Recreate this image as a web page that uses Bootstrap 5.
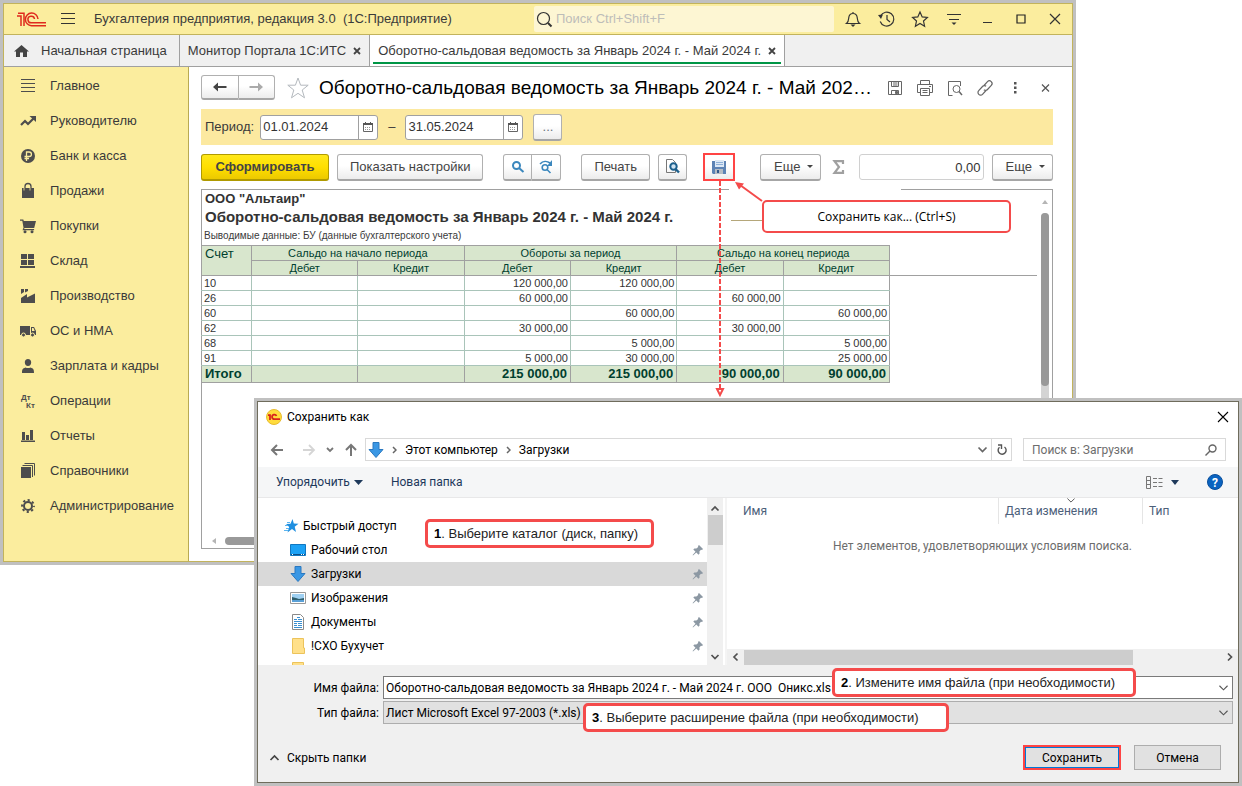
<!DOCTYPE html>
<html lang="ru">
<head>
<meta charset="utf-8">
<meta name="viewport" content="width=device-width, initial-scale=1">
<title>Бухгалтерия предприятия, редакция 3.0</title>
<link href="https://cdn.jsdelivr.net/npm/bootstrap@5.3.0/dist/css/bootstrap.min.css" rel="stylesheet">
<style>
  body { font: 13px/18px "Liberation Sans", Arial, sans-serif; color: #3a3a3a; background: #fff; min-height: 100vh; overflow: hidden; }
  svg { display: block; flex: none; overflow: visible; }
  a { color: inherit; text-decoration: none; }
  button { color: inherit; }
  .bare { background: none; border: 0; padding: 0; }

  /* application window */
  .app-win { position: absolute; top: 0; left: 0; right: 166px; border: 3px solid #c0c0c0; }
  .app-frame { border: 1px solid #c2b35c; }
  .app-title { height: 31px; background: #fbed9e; border-bottom: 1px solid #c2b35c; padding-left: 13px; }
  .app-menu { margin: 0 15px 0 14px; }
  .app-search { width: 300px; height: 26px; background: #fdf6d3; border-radius: 2px; padding-left: 3px; gap: 4px; margin-right: 2px; }
  .app-search input { background: none; border: 0; outline: 0; padding: 0; width: 240px; font-size: 13px; }
  .app-search input::placeholder { color: #bdbdb9; opacity: 1; }
  .win-tools { width: 236px; }
  .win-tools button { flex: 1; display: flex; justify-content: center; }
  .tabs-bar { height: 32px; background: #f0f0f0; border-bottom: 1px solid #a0a0a0; }
  .tab-item { border-right: 1px solid #a0a0a0; padding: 0 8px; gap: 7px; white-space: nowrap; }
  .tab-home { padding: 0 12px 0 10px; gap: 12px; }
  .tab-item.current { background: #fff; padding: 0 8px; position: relative; }
  .tab-item.current::after { content: ""; position: absolute; left: 3px; right: 3px; bottom: 2px; height: 2px; background: #009646; }

  .side-menu { width: 185px; background: #fbed9e; border-right: 1px solid #b9aa52; padding-top: 1px; }
  .side-menu a { height: 35px; padding-left: 14px; gap: 12px; }
  .side-menu svg { width: 20px; height: 20px; fill: #4d4d4d; }

  .work-area { padding: 8px 19px 12px 12px; min-width: 0; }
  .btn-1c { --bs-btn-font-size: 13px; --bs-btn-line-height: 18px; height: 27px; padding: 0 12px; border: 1px solid #b0b0b0; border-bottom: 2px solid #a6a6a6; border-radius: 3px; background: linear-gradient(#fff 45%, #ececec); color: #444; white-space: nowrap; display: inline-flex; align-items: center; justify-content: center; flex: none; }
  .btn-run { background: linear-gradient(#ffe81a, #ffdf00 50%, #ecc900); border-color: #b09a00; font-weight: 700; width: 128px; }
  .btn-more { padding: 0 7px 0 13px; }
  .split-btn > .btn-1c:first-child { border-radius: 3px 0 0 3px; }
  .split-btn > .btn-1c:last-child { border-radius: 0 3px 3px 0; border-left: 0; }
  .nav-pair .btn-1c { height: 25px; padding: 0; }
  .sq { width: 29px; padding: 0; }
  .doc-title { font-size: 19px; line-height: 25px; color: #000; margin: 0 11px 0 10px; min-width: 0; }
  .doc-tools { gap: 14px; }
  .period-bar { background: #fce9a0; height: 36px; margin-top: 9px; padding: 0 4px; gap: 6px; }
  .date-box { width: 118px; height: 25px; border: 1px solid #a0a0a0; border-radius: 3px; background: #fff; }
  .date-box input { border: 0; outline: 0; background: none; width: 98px; padding: 0 2px; color: #333; border-right: 1px solid #a0a0a0; }
  .date-box button { flex: 1; }
  .cmd-bar { margin-top: 8px; gap: 8px; }
  .red-frame { border: 2px solid #f44; height: 28px; width: 32px; flex: none; }
  .after-red { margin-left: 17px; }
  .sum-box { width: 125px; height: 26px; border: 1px solid #d0d0d0; border-radius: 3px; text-align: right; padding: 0 2px; color: #333; }
  .caret { width: 0; height: 0; border: 3px solid transparent; border-top-color: #444; border-bottom: 0; margin-left: 7px; }

  .report { margin-top: 8px; height: 360px; border: 1px solid #a0a0a0; position: relative; }
  .report-org { font-size: 13px; line-height: 16px; padding: 1px 3px 0; color: #333; }
  .report-name { font-size: 15px; line-height: 20px; font-weight: 700; padding-left: 3px; margin: 0; color: #333; }
  .report-note { font-size: 10px; line-height: 18px; padding-left: 2px; }
  .osv { table-layout: fixed; width: 689px; border-collapse: collapse; margin-left: -1px; font-size: 11px; line-height: 14px; color: #333; }
  .osv col:first-child { width: 50px; }
  .osv th, .osv td { height: 15px; padding: 0 2px; border: 1px solid #a9c4b9; text-align: right; white-space: nowrap; }
  .osv td:first-child { text-align: left; border-left-color: #a0a0a0; }
  .osv td:last-child { border-right-color: #a0a0a0; }
  .osv th, .osv tfoot td { background: #d8e6cd; border-color: #a0a0a0; color: #00402f; }
  .osv th { font-weight: 400; text-align: center; }
  .osv .acc { font-size: 13px; text-align: left; vertical-align: top; padding: 1px 3px; }
  .osv tfoot td { font-weight: 700; font-size: 13px; height: 17px; padding: 0 3px; }
  .freeze-line { position: absolute; left: 687px; right: 15px; top: 85px; height: 1px; background: #a0a0a0; }
  .vscroll { position: absolute; right: 3px; top: 10px; bottom: 16px; width: 8px; }
  .vscroll .track { flex: 1; background: #d4d4d4; border-radius: 4px; }
  .vscroll .thumb { height: 173px; background: #999; border-radius: 4px; }
  .hscroll { position: absolute; left: 10px; right: 16px; bottom: 3px; height: 8px; gap: 8px; }
  .hscroll .thumb { width: 400px; height: 8px; background: #999; border-radius: 4px; }

  /* red notes over the windows */
  .note { position: absolute; background: #fff; border: 3px solid #f44b4b; border-radius: 5px; color: #222; font: 13px/21px "Liberation Sans", Arial, sans-serif; white-space: nowrap; padding: 1px 6px; }
  .note b { color: #000; }
  .note-save { left: 759px; top: 197px; width: 249px; height: 33px; border-width: 2px; text-align: center; font: 12px/28px "Open Sans", sans-serif; color: #000; }
  .note-arrows { position: absolute; left: 697px; top: 150px; }

  /* save dialog */
  .dlg { position: absolute; top: 398px; left: 254px; right: 0; border: 3px solid #c0c0c0; font: 12px/18px Roboto, "Open Sans", sans-serif; color: #000; background: #fff; }
  .dlg-frame { border: 1px solid #6f6c5c; }
  .dlg-title { height: 30px; padding: 0 10px 0 8px; gap: 5px; }
  .dlg-nav { padding: 6px 12px 6px 13px; }
  .addr { height: 23px; border: 1px solid #d9d9d9; padding-left: 2px; }
  .addr .refresh { width: 20px; height: 21px; border-left: 1px solid #d9d9d9; }
  .dlg-search { width: 203px; height: 23px; border: 1px solid #d9d9d9; padding: 0 8px; margin-left: 11px; }
  .dlg-search input { border: 0; outline: 0; padding: 0; width: 160px; }
  .dlg-search input::placeholder { color: #6d6d6d; opacity: 1; }
  .dlg-cmd { height: 31px; background: #f5f6f7; border-bottom: 1px solid #e8e8e9; padding: 0 15px 0 18px; color: #1e395b; }
  .dlg-body { height: 167px; }
  .tree { width: 449px; padding-top: 16px; overflow: hidden; }
  .tree a { height: 24px; flex: none; padding: 0 3px 0 32px; gap: 5px; }
  .tree a.root { padding-left: 25px; gap: 4px; }
  .tree a.on { background: #d9d9d9; }
  .tree .pic { width: 16px; height: 16px; }
  .sbar { background: #f0f0f0; }
  .sbar-v { width: 16px; }
  .sbar-v .thumb { width: 15px; height: 30px; background: #cdcdcd; }
  .files { border-left: 2px solid #f4f4f4; margin-left: 2px; min-width: 0; }
  .files-head { height: 26px; color: #4c607a; }
  .files-head button { text-align: left; padding-left: 6px; position: relative; }
  .files-head .col-date, .files-head .col-type { border-left: 1px solid #e5e5e5; }
  .files-head .col-date { width: 144px; }
  .files-head .col-type { width: 96px; }
  .files-head .sort { position: absolute; top: 0; left: 68px; }
  .files-empty { color: #6d6d6d; margin-top: 13px; }
  .sbar-h { height: 16px; }
  .sbar-h .thumb { height: 15px; width: 389px; background: #cdcdcd; }
  .dlg-foot { background: #f0f0f0; padding: 11px 5px 12px 0; }
  .dlg-foot label { width: 121px; text-align: right; }
  .combo { height: 23px; border: 1px solid #7a7a7a; background: #fff; margin-left: 4px; }
  .combo input, .combo select { border: 0; outline: 0; background: none; appearance: none; width: 100%; padding: 0 2px; color: #000; }
  .combo-type { border-color: #adadad; background: #e1e1e1; }
  .type-row { margin-top: 2px; }
  .foot-actions { margin-top: 21px; padding: 0 12px; gap: 13px; }
  .dlg-btn { width: 87px; height: 25px; border: 1px solid #adadad; background: #e1e1e1; padding: 0; border-radius: 0; }
  .dlg-btn.main { width: 98px; border: 2px solid #f44; box-shadow: inset 0 0 0 1px #0078d7; }
  .note-1 { left: 168px; top: 118px; width: 229px; }
  .note-2 { left: 575px; top: 267px; width: 304px; }
  .note-3 { left: 326px; top: 302px; width: 366px; }
</style>
</head>
<body>

<svg width="0" height="0" class="position-absolute">
  <defs>
    <symbol id="pin" viewBox="0 0 12 12"><path fill="#8c98a3" d="M7 1l4 4-1 1-1-.2-1.600 1.800.2 2L6.500 10.700 4.300 8.500 1 11.400.6 11 3.500 7.700 1.300 5.500l1.100-1.100 2 .2 1.800-1.600L6 2z"/></symbol>
    <symbol id="cal" viewBox="0 0 10 10"><path fill="#555" d="M0 1h2V0h1v1h4V0h1v1h2v2H0z"/><path fill="none" stroke="#666" d="M.5 3v6.500h9V3"/><path fill="#999" d="M2 5h1v1H2zm2 0h1v1H4zm2 0h1v1H6zM2 7h1v1H2zm2 0h1v1H4zm2 0h1v1H6z"/></symbol>
    <symbol id="down-blue" viewBox="0 0 16 16"><path fill="#3a97e4" stroke="#2a78c0" d="M5 .5h6v7h4L8 15.500 1 7.500h4z"/></symbol>
    <symbol id="chev-d" viewBox="0 0 10 6"><path fill="none" stroke="#555" stroke-width="1.200" d="M.5.500 5 5 9.500.5"/></symbol>
    <symbol id="chev-r" viewBox="0 0 5 8"><path fill="none" stroke="#666" stroke-width="1.500" d="M1 1l3 3-3 3"/></symbol>
    <symbol id="x" viewBox="0 0 8 8"><path fill="none" stroke="#444" stroke-width="1.800" d="M1 1l6 6M7 1 1 7"/></symbol>
  </defs>
</svg>

<div class="app-win">
  <div class="app-frame">
    <header class="app-title d-flex align-items-center">
      <svg width="30" height="15" viewBox="0 0 30 15" fill="none" stroke="#df2a1e" stroke-width="1.500"><path d="M0 4h4v10M1 1.200h6V14"/><path d="M21 7A6.300 6.300 0 1 0 14.500 13.700H29M17.500 7A3.300 3.300 0 1 0 14.500 10.800H29"/></svg>
      <button class="bare app-menu" aria-label="Меню"><svg width="14" height="12" viewBox="0 0 14 12" stroke="#333" stroke-width="1"><path d="M0 .5h14M0 5.500h14M0 10.500h14"/></svg></button>
      <span class="text-nowrap ms-1">Бухгалтерия предприятия, редакция 3.0 &nbsp;(1С:Предприятие)</span>
      <label class="app-search d-flex align-items-center ms-auto">
        <svg width="15" height="15" viewBox="0 0 15 15" fill="none" stroke="#333" stroke-width="1.200"><circle cx="6.500" cy="6.500" r="6"/><path stroke-width="2" d="M11 11l3.500 3.500"/></svg>
        <input type="text" placeholder="Поиск Ctrl+Shift+F">
      </label>
      <div class="win-tools d-flex align-items-center">
        <button class="bare" aria-label="Уведомления"><svg width="16" height="16" viewBox="0 0 16 16" fill="none" stroke="#333" stroke-width="1.200"><path d="M1.500 12.500c2-1.500 2-3 2.200-5.500C4 4 5.500 2.500 8 2.500S12 4 12.300 7c.2 2.500.2 4 2.200 5.500zM8 2.500V1"/><path fill="#333" stroke="none" d="M5.500 13.500h5L8 16z"/></svg></button>
        <button class="bare" aria-label="История"><svg width="17" height="16" viewBox="0 0 17 16" fill="none" stroke="#333" stroke-width="1.200"><path d="M2.500 5a7 7 0 1 1-.3 5.500M9 4v4.500l3 2.500"/><path fill="#333" stroke="none" d="M0 4l5-.5L3 8z"/></svg></button>
        <button class="bare" aria-label="Избранное"><svg width="16" height="16" viewBox="0 0 16 16" fill="none" stroke="#333" stroke-width="1.200"><path d="M8 1l2.200 4.900 5.200.5-3.900 3.600 1.100 5.200L8 12.500l-4.600 2.700L4.500 10 .6 6.400l5.200-.5z"/></svg></button>
        <button class="bare" aria-label="Настройки"><svg width="14" height="14" viewBox="0 0 14 14" stroke="#333" stroke-width="1.200"><path d="M0 2.500h14M2 7.500h10"/><path fill="#333" stroke="none" d="M4.500 10.500h5L7 13z"/></svg></button>
        <button class="bare" aria-label="Свернуть"><svg width="10" height="10" viewBox="0 0 10 10" stroke="#333"><path d="M0 8.500h9"/></svg></button>
        <button class="bare" aria-label="Развернуть"><svg width="10" height="10" viewBox="0 0 10 10" stroke="#222" stroke-width="1.200" fill="none"><path d="M1 1h8v8H1z"/></svg></button>
        <button class="bare" aria-label="Закрыть"><svg width="10" height="10" viewBox="0 0 10 10" stroke="#333" stroke-width="1.200"><path d="M0 0l10 10M10 0 0 10"/></svg></button>
      </div>
    </header>

    <nav class="tabs-bar d-flex">
      <a href="#" class="tab-item tab-home d-flex align-items-center">
        <svg width="15" height="12" viewBox="0 0 15 12" fill="#444"><path d="M7.500 0 15 6.500h-2V12H9V7.500H6V12H2V6.500H0z"/></svg>
        <span>Начальная страница</span>
      </a>
      <div class="tab-item d-flex align-items-center"><a href="#">Монитор Портала 1С:ИТС</a><button class="bare" aria-label="Закрыть вкладку"><svg width="8" height="8"><use href="#x"/></svg></button></div>
      <div class="tab-item current d-flex align-items-center"><a href="#">Оборотно-сальдовая ведомость за Январь 2024 г. - Май 2024 г.</a><button class="bare" aria-label="Закрыть вкладку"><svg width="8" height="8"><use href="#x"/></svg></button></div>
    </nav>

    <div class="d-flex">
      <nav class="side-menu d-flex flex-column flex-shrink-0">
        <a href="#" class="d-flex align-items-center"><svg viewBox="0 0 20 20"><path d="M3 3h14v1H3zm0 4h14v1H3zm0 4h14v1H3zm0 4h14v1H3z"/></svg>Главное</a>
        <a href="#" class="d-flex align-items-center"><svg viewBox="0 0 20 20"><path fill="none" stroke="#4d4d4d" stroke-width="2.200" d="M3 14l4-4 3 3 6-6"/><path d="M11.500 5H18v6z"/></svg>Руководителю</a>
        <a href="#" class="d-flex align-items-center"><svg viewBox="0 0 20 20"><circle cx="10" cy="10" r="7"/><path fill="none" stroke="#fbed9e" stroke-width="1.300" d="M8.500 15V6h2.700a2.200 2.200 0 0 1 0 4.500H6.500M6.500 12.500H11"/></svg>Банк и касса</a>
        <a href="#" class="d-flex align-items-center"><svg viewBox="0 0 20 20"><path d="M4 7h12v10H4z"/><path fill="none" stroke="#4d4d4d" stroke-width="1.300" d="M7 9V5.500a3 3 0 0 1 6 0V9"/><path fill="none" stroke="#fbed9e" stroke-width=".8" d="M6 7v2.500M12 7v2.500"/></svg>Продажи</a>
        <a href="#" class="d-flex align-items-center"><svg viewBox="0 0 20 20"><path d="M2 3.500h3.300l.5 1.500H18l-1.800 7H6.500l-.4 1h10v1.200H4.500l1-2.500L4.300 4.700H2z"/><circle cx="7" cy="15.700" r="1.500"/><circle cx="14" cy="15.700" r="1.500"/></svg>Покупки</a>
        <a href="#" class="d-flex align-items-center"><svg viewBox="0 0 20 20"><path d="M3 3h6v5H3zm7 0h6v5h-6zM3 9h6v5H3zm7 0h6v5h-6zM2 15h15v2H2z"/></svg>Склад</a>
        <a href="#" class="d-flex align-items-center"><svg viewBox="0 0 20 20"><path d="M3 17v-5l6-4v3.500l8-4V17zM3 3h3v3L3 8zm4 0h3v2L7 6.500z"/></svg>Производство</a>
        <a href="#" class="d-flex align-items-center"><svg viewBox="0 0 20 20"><path d="M2 5h10v9H2zm11 1h3l2 4v4h-5z"/><path fill="#fbed9e" d="M14 7h1.500l1.200 3H14z"/><g stroke="#fbed9e"><circle cx="5.500" cy="14" r="2"/><circle cx="14.500" cy="14" r="2"/></g></svg>ОС и НМА</a>
        <a href="#" class="d-flex align-items-center"><svg viewBox="0 0 20 20"><path d="M10 3c2 0 3.200 1.300 3.200 3.300C13.200 8.500 12 10 10 10S6.800 8.500 6.800 6.300C6.800 4.300 8 3 10 3zM4 17c0-3.500.5-4.500 3.500-5.500 1.500.8 3.500.8 5 0 3 1 3.500 2 3.500 5.500z"/></svg>Зарплата и кадры</a>
        <a href="#" class="d-flex align-items-center"><svg viewBox="0 0 20 20" font-family="Liberation Sans" font-size="8" font-weight="700"><text x="3" y="9">Дт</text><text x="8" y="17">Кт</text></svg>Операции</a>
        <a href="#" class="d-flex align-items-center"><svg viewBox="0 0 20 20"><path d="M4 6h3v8H4zm4 3h3v5H8zm4-5h3v10h-3zM3 14.500h14V16H3z"/></svg>Отчеты</a>
        <a href="#" class="d-flex align-items-center"><svg viewBox="0 0 20 20"><path d="M3 6h10v11H3z"/><path fill="none" stroke="#4d4d4d" d="M4.500 4.500h10V16M6.500 2.500h10V14.500"/></svg>Справочники</a>
        <a href="#" class="d-flex align-items-center"><svg viewBox="0 0 20 20"><g fill="none" stroke="#4d4d4d"><circle cx="10" cy="10" r="4" stroke-width="2"/><circle cx="10" cy="10" r="5.900" stroke-width="2" stroke-dasharray="2.200 2.434" stroke-dashoffset="1.100"/></g></svg>Администрирование</a>
      </nav>

      <main class="work-area flex-grow-1">
        <div class="d-flex align-items-center">
          <div class="split-btn nav-pair d-flex">
            <button class="btn btn-1c" aria-label="Назад"><svg width="36" height="10" viewBox="0 0 36 10"><path fill="#444" d="M11 5l5-4.500V4h8.500v2H16v3.500z"/></svg></button>
            <button class="btn btn-1c" aria-label="Вперед"><svg width="35" height="10" viewBox="0 0 35 10"><path fill="#aaa" d="M24 5l-5-4.500V4h-8.500v2H19v3.500z"/></svg></button>
          </div>
          <button class="bare ms-2 ps-1" aria-label="В избранное"><svg width="22" height="22" viewBox="0 0 22 22" fill="#fff" stroke="#b4b9be"><path d="M11 1l2.600 7.200h7.600L15.200 13l2.300 7.800L11 16.300 4.500 20.800 6.800 13 .8 8.200h7.600z"/></svg></button>
          <h1 class="doc-title text-truncate flex-grow-1 fw-normal">Оборотно-сальдовая ведомость за Январь 2024 г. - Май 2024 г.</h1>
          <div class="doc-tools d-flex align-items-center">
            <button class="bare" aria-label="Сохранить"><svg width="16" height="16" viewBox="0 0 16 16" fill="none" stroke="#666"><path d="M1.500 1.500h13v13h-13zM4.500 1.500v5h7v-5M6 3h4.500M6 5h4.500M4.500 14.500v-4h7v4"/><path fill="#666" d="M8.500 11.500h2v2h-2z"/></svg></button>
            <button class="bare" aria-label="Печать"><svg width="16" height="16" viewBox="0 0 16 16" fill="none" stroke="#666"><path d="M3.500 4.500v-4h9v4M3.500 12.500H.5v-8h15v8h-3M3.500 8.500h9v7h-9zM5.500 10.500h5M5.500 12.500h5M12 6.500h2"/></svg></button>
            <button class="bare" aria-label="Просмотр"><svg width="16" height="16" viewBox="0 0 16 16" fill="none" stroke="#666"><path d="M5.500 15.500h-4v-14h12V6"/><circle cx="9.500" cy="9" r="3.500"/><path stroke-width="1.500" d="M12 11.500l3 3.500"/></svg></button>
            <button class="bare" aria-label="Ссылка"><svg width="16" height="16" viewBox="0 0 16 16" fill="none" stroke="#666" stroke-width="1.200"><path d="M7 5.500l3.500-3.800a2.500 2.500 0 0 1 3.800 3.600L10.500 9.500a2.500 2.500 0 0 1-3.600.2M9 10.500l-3.500 3.800a2.500 2.500 0 0 1-3.800-3.600L5.500 6.500a2.500 2.500 0 0 1 3.600-.2"/></svg></button>
            <button class="bare" aria-label="Еще"><svg width="16" height="12" viewBox="0 0 16 12" fill="#555"><path d="M7 0h2.500v2.500H7zm0 4.500h2.500V7H7zM7 9h2.500v2.500H7z"/></svg></button>
            <button class="bare" aria-label="Закрыть"><svg width="16" height="8" viewBox="0 0 16 8" stroke="#555" stroke-width="1.200"><path d="M5 .5l7 7M12 .5l-7 7"/></svg></button>
          </div>
        </div>

        <div class="period-bar d-flex align-items-center">
          <label for="from" class="text-nowrap">Период:</label>
          <div class="date-box d-flex"><input id="from" type="text" value="01.01.2024"><button class="bare d-flex align-items-center justify-content-center" aria-label="Календарь"><svg width="10" height="10"><use href="#cal"/></svg></button></div>
          <span class="px-1">–</span>
          <div class="date-box d-flex"><input id="to" type="text" aria-label="Конец периода" value="31.05.2024"><button class="bare d-flex align-items-center justify-content-center" aria-label="Календарь"><svg width="10" height="10"><use href="#cal"/></svg></button></div>
          <button class="btn btn-1c sq ms-1 text-secondary">...</button>
        </div>

        <div class="cmd-bar d-flex align-items-center">
          <button class="btn btn-1c btn-run">Сформировать</button>
          <button class="btn btn-1c">Показать настройки</button>
          <div class="split-btn d-flex ms-2 me-2 ps-1">
            <button class="btn btn-1c sq" aria-label="Найти"><svg width="12" height="12" viewBox="0 0 12 12" fill="none" stroke="#3b87bd" stroke-width="2"><circle cx="4.500" cy="4.500" r="3.500"/><path d="M7 7l4.500 4"/></svg></button>
            <button class="btn btn-1c sq" aria-label="Найти далее"><svg width="14" height="14" viewBox="0 0 14 14" fill="none" stroke="#3b87bd" stroke-width="1.600"><circle cx="6" cy="7.500" r="2.800"/><path d="M8 9.500l3.500 3.500M1 4C4 .8 8 .8 11 3"/><path fill="#3b87bd" stroke="none" d="M13 0v6H8z"/></svg></button>
          </div>
          <button class="btn btn-1c ms-1">Печать</button>
          <button class="btn btn-1c sq" aria-label="Предварительный просмотр"><svg width="14" height="15" viewBox="0 0 14 15" fill="none"><path stroke="#777" d="M.5.500h6l3 3v10h-9z"/><circle cx="7.500" cy="7.500" r="3.200" stroke="#1c5f8c" stroke-width="2" fill="#cfe3f2"/><path stroke="#1c5f8c" stroke-width="2.400" d="M9.500 10l3.500 3.500"/></svg></button>
          <div class="red-frame ms-2">
            <button class="btn btn-1c w-100 h-100 p-0 border-0 rounded-0" aria-label="Сохранить как"><svg width="14" height="14" viewBox="0 0 14 14"><path fill="#5d83b5" d="M0 1h14v13H1l-1-1z"/><path fill="#dce8f5" d="M3 0h9v7H3z"/><path stroke="#8fb0d8" d="M4 2.500h7M4 4.500h7"/><path fill="#b5bcc4" d="M3 9h8v5H3z"/><path fill="#31598c" d="M5 10h2v3H5z"/></svg></button>
          </div>
          <button class="btn btn-1c btn-more after-red">Еще<span class="caret"></span></button>
          <svg class="ms-1" width="11" height="14" viewBox="0 0 11 14" fill="none" stroke="#a0a0a0" stroke-width="2.200"><path d="M10 4V1.200H1.500L6 7l-4.500 5.800H10V10"/></svg>
          <input class="sum-box ms-auto" type="text" aria-label="Сумма" value="0,00">
          <button class="btn btn-1c btn-more">Еще<span class="caret"></span></button>
        </div>

        <section class="report">
          <div class="report-org fw-bold">ООО "Альтаир"</div>
          <h2 class="report-name">Оборотно-сальдовая ведомость за Январь 2024 г. - Май 2024 г.</h2>
          <div class="report-note">Выводимые данные: БУ (данные бухгалтерского учета)</div>
          <table class="osv">
            <colgroup><col><col><col><col><col><col><col></colgroup>
            <thead>
              <tr><th rowspan="2" class="acc">Счет</th><th colspan="2">Сальдо на начало периода</th><th colspan="2">Обороты за период</th><th colspan="2">Сальдо на конец периода</th></tr>
              <tr><th>Дебет</th><th>Кредит</th><th>Дебет</th><th>Кредит</th><th>Дебет</th><th>Кредит</th></tr>
            </thead>
            <tbody>
              <tr><td>10</td><td></td><td></td><td>120 000,00</td><td>120 000,00</td><td></td><td></td></tr>
              <tr><td>26</td><td></td><td></td><td>60 000,00</td><td></td><td>60 000,00</td><td></td></tr>
              <tr><td>60</td><td></td><td></td><td></td><td>60 000,00</td><td></td><td>60 000,00</td></tr>
              <tr><td>62</td><td></td><td></td><td>30 000,00</td><td></td><td>30 000,00</td><td></td></tr>
              <tr><td>68</td><td></td><td></td><td></td><td>5 000,00</td><td></td><td>5 000,00</td></tr>
              <tr><td>91</td><td></td><td></td><td>5 000,00</td><td>30 000,00</td><td></td><td>25 000,00</td></tr>
            </tbody>
            <tfoot><tr><td>Итого</td><td></td><td></td><td>215 000,00</td><td>215 000,00</td><td>90 000,00</td><td>90 000,00</td></tr></tfoot>
          </table>
          <div class="freeze-line"></div>
          <div class="vscroll d-flex flex-column">
            <svg class="mb-2" width="8" height="5" viewBox="0 0 8 5" fill="#b5b5b5"><path d="M4 0l3 4H1z"/></svg>
            <div class="track"><div class="thumb"></div></div>
          </div>
          <div class="hscroll d-flex align-items-center"><svg width="5" height="8" viewBox="0 0 5 8" fill="#b5b5b5"><path d="M4 1v6L0 4z"/></svg><div class="thumb"></div></div>
        </section>
      </main>
    </div>
  </div>

  <svg class="note-arrows" width="210" height="250" viewBox="0 0 210 250" fill="none" stroke="#f44b4b">
    <path stroke="#fff" stroke-width="3" d="M29 36.500h172"/>
    <path stroke="#b5a77a" d="M31 67.500h32"/>
    <path stroke-width="2" stroke-dasharray="5 2" d="M20 28v209"/>
    <path stroke-width="2" d="M17 236l3 6 3-6zM62 48 40 32"/>
    <path fill="#f44b4b" stroke="none" d="M35 29l9 1.500-5 6z"/>
  </svg>
  <div class="note note-save">Сохранить как... (Ctrl+S)</div>
</div>

<div class="dlg" role="dialog" aria-label="Сохранить как">
  <div class="dlg-frame">
    <div class="dlg-title d-flex align-items-center">
      <svg width="16" height="16" viewBox="0 0 16 16"><circle cx="8" cy="8" r="7.500" fill="#ffdc3c" stroke="#e8bb30"/><path fill="none" stroke="#d8241c" stroke-width="1.800" d="M2 6.200h2V11M10.500 7A2.300 2.300 0 1 0 8.300 10.200H14"/></svg>
      <span>Сохранить как</span>
      <button class="bare ms-auto" aria-label="Закрыть"><svg width="10" height="10" viewBox="0 0 10 10" stroke="#000" stroke-width="1.100"><path d="M0 0l10 10M10 0 0 10"/></svg></button>
    </div>

    <div class="dlg-nav d-flex align-items-center">
      <button class="bare" aria-label="Назад"><svg width="12" height="12" viewBox="0 0 12 12" fill="none" stroke="#777" stroke-width="2"><path d="M12 6H1M6 1 1 6l5 5"/></svg></button>
      <button class="bare ms-3 ps-1" aria-label="Вперед"><svg width="12" height="12" viewBox="0 0 12 12" fill="none" stroke="#d5d5d5" stroke-width="1.800"><path d="M0 6h11M6 1l5 5-5 5"/></svg></button>
      <button class="bare ms-2 ps-1" aria-label="Недавние"><svg width="6" height="6" viewBox="0 0 6 6" fill="none" stroke="#777" stroke-width="1.800"><path d="M0 1l3 3 3-3"/></svg></button>
      <button class="bare ms-2 ps-1" aria-label="Вверх"><svg width="12" height="12" viewBox="0 0 12 12" fill="none" stroke="#777" stroke-width="2"><path d="M6 12V1M1 6l5-5 5 5"/></svg></button>
      <div class="addr d-flex align-items-center flex-grow-1 ms-2">
        <svg width="16" height="16"><use href="#down-blue"/></svg>
        <svg class="ms-2" width="5" height="8"><use href="#chev-r"/></svg>
        <a href="#" class="ms-2">Этот компьютер</a>
        <svg class="ms-2" width="5" height="8"><use href="#chev-r"/></svg>
        <a href="#" class="ms-2">Загрузки</a>
        <button class="bare ms-auto me-1" aria-label="Список"><svg width="9" height="6" viewBox="0 0 9 6" fill="none" stroke="#666" stroke-width="1.700"><path d="M.5.500l4 4 4-4"/></svg></button>
        <button class="bare refresh d-flex align-items-center justify-content-center" aria-label="Обновить"><svg width="10" height="11" viewBox="0 0 10 11" fill="none" stroke="#555" stroke-width="1.400"><path d="M7.500 3A4 4 0 1 1 2.500 3.200"/><path d="M1 1h3.500v4"/></svg></button>
      </div>
      <label class="dlg-search d-flex align-items-center justify-content-between">
        <input type="text" placeholder="Поиск в: Загрузки">
        <svg width="12" height="12" viewBox="0 0 12 12" fill="none" stroke="#666" stroke-width="1.400"><circle cx="7.500" cy="4.500" r="3.500"/><path d="M5 7 .5 11.500"/></svg>
      </label>
    </div>

    <div class="dlg-cmd d-flex align-items-center">
      <button class="bare d-flex align-items-center">Упорядочить<svg class="ms-1" width="9" height="5" viewBox="0 0 9 5"><path fill="#1e395b" d="M0 0h9L4.500 5z"/></svg></button>
      <button class="bare ms-4 ps-1">Новая папка</button>
      <button class="bare ms-auto d-flex align-items-center gap-2" aria-label="Вид"><svg width="17" height="13" viewBox="0 0 17 13" fill="none" stroke="#777"><path d="M.5.500h4v12h-4zM.5 4.500h4M.5 8.500h4M7 2.500h4m1.500 0h4M7 6.500h4m1.500 0h4M7 10.500h4m1.500 0h4"/></svg><svg width="8" height="5" viewBox="0 0 8 5"><path fill="#1e395b" d="M0 0h8L4 5z"/></svg></button>
      <button class="bare ms-4 ps-1" aria-label="Справка"><svg width="16" height="16" viewBox="0 0 16 16"><circle cx="8" cy="8" r="7.500" fill="#0a63c0" stroke="#0a4f9c"/><text x="8" y="12.500" text-anchor="middle" font-size="12" font-weight="700" fill="#fff">?</text></svg></button>
    </div>

    <div class="dlg-body d-flex">
      <nav class="tree d-flex flex-column flex-shrink-0">
        <a href="#" class="root d-flex align-items-center"><svg class="pic" viewBox="0 0 16 16"><path fill="#1f8fe0" d="M9.500 1l1.300 4.500 4.700.2-3.800 3L13 14 9 11l-4.500 3.500L6.200 9 3 6l4.500-.3z"/><path stroke="#5ab4f0" d="M4 4.500h3M2 7.500h3M3 10.500h3M1 12.500h4"/></svg>Быстрый доступ</a>
        <a href="#" class="d-flex align-items-center"><svg class="pic" viewBox="0 0 16 16"><path fill="#1ba1f5" stroke="#1177c0" d="M.5 2.500h15v11H.5z"/><path stroke="#0c4f88" d="M1 12.500h14"/><path stroke="#fff" d="M2 12.500h1m8 0h1m1 0h1"/></svg><span class="flex-grow-1">Рабочий стол</span><svg width="12" height="12"><use href="#pin"/></svg></a>
        <a href="#" class="on d-flex align-items-center"><svg class="pic"><use href="#down-blue"/></svg><span class="flex-grow-1">Загрузки</span><svg width="12" height="12"><use href="#pin"/></svg></a>
        <a href="#" class="d-flex align-items-center"><svg class="pic" viewBox="0 0 16 16"><path fill="#fff" stroke="#999" d="M.5 2.500h15v11H.5z"/><path fill="#9fd0f2" d="M2 4h12v8H2z"/><path fill="#2f5f6e" d="M2 7l4 1 3 1 5-1v2H2z"/><path fill="#5aa0d6" d="M2 10h12v2H2z"/></svg><span class="flex-grow-1">Изображения</span><svg width="12" height="12"><use href="#pin"/></svg></a>
        <a href="#" class="d-flex align-items-center"><svg class="pic" viewBox="0 0 16 16"><path fill="#fff" stroke="#8a8a8a" d="M2.500.500h8l3 3v12h-11z"/><path stroke="#3a8fd0" d="M7 3.500h3M4 5.500h3m1 0h4M4 7.500h8M4 9.500h3M8 9.500h4M4 11.500h3m1 0h4M4 13.500h8"/></svg><span class="flex-grow-1">Документы</span><svg width="12" height="12"><use href="#pin"/></svg></a>
        <a href="#" class="d-flex align-items-center"><svg class="pic" viewBox="0 0 16 16"><path fill="#ffe08a" stroke="#ecc35a" d="M2.500.500h11v9.500h1v5.500h-12z"/></svg><span class="flex-grow-1">!СХО Бухучет</span><svg width="12" height="12"><use href="#pin"/></svg></a>
        <a href="#" class="d-flex align-items-center" aria-label="Папка"><svg class="pic" viewBox="0 0 16 16"><path fill="#ffe08a" stroke="#ecc35a" d="M2.500.500h11v9.500h1v5.500h-12z"/></svg></a>
      </nav>
      <div class="sbar sbar-v d-flex flex-column align-items-center flex-shrink-0">
        <svg class="my-1 pt-1" width="8" height="9" viewBox="0 0 8 5" fill="none" stroke="#505050" stroke-width="1.700"><path d="M.5 4.500 4 1l3.500 3.500"/></svg>
        <div class="thumb"></div>
        <svg class="mt-auto mb-1" width="8" height="8" viewBox="0 0 8 5" fill="none" stroke="#505050" stroke-width="1.700"><path d="M.5.500 4 4 7.500.5"/></svg>
      </div>
      <div class="files flex-grow-1 d-flex flex-column">
        <div class="files-head d-flex">
          <button class="bare flex-grow-1 ps-3">Имя</button>
          <button class="bare col-date">Дата изменения<svg class="sort" width="8" height="5" viewBox="0 0 10 6"><use href="#chev-d"/></svg></button>
          <button class="bare col-type">Тип</button>
        </div>
        <div class="files-empty text-center">Нет элементов, удовлетворяющих условиям поиска.</div>
        <div class="sbar sbar-h d-flex align-items-center mt-auto">
          <svg class="mx-1" width="9" height="8" viewBox="0 0 9 8" fill="none" stroke="#505050" stroke-width="1.700"><path d="M6.500.500 3 4l3.500 3.500"/></svg>
          <div class="thumb"></div>
          <svg class="ms-auto me-1" width="9" height="8" viewBox="0 0 9 8" fill="none" stroke="#505050" stroke-width="1.700"><path d="M3 .5 6.500 4 3 7.500"/></svg>
        </div>
      </div>
    </div>

    <div class="dlg-foot">
      <div class="d-flex align-items-center">
        <label for="fname">Имя файла:</label>
        <div class="combo flex-grow-1 d-flex align-items-center"><input id="fname" type="text" value="Оборотно-сальдовая ведомость за Январь 2024 г. - Май 2024 г. ООО  Оникс.xls"><svg class="me-1" width="9" height="6"><use href="#chev-d"/></svg></div>
      </div>
      <div class="type-row d-flex align-items-center">
        <label for="ftype">Тип файла:</label>
        <div class="combo combo-type flex-grow-1 d-flex align-items-center"><select id="ftype"><option>Лист Microsoft Excel 97-2003 (*.xls)</option></select><svg class="me-1" width="9" height="6"><use href="#chev-d"/></svg></div>
      </div>
      <div class="foot-actions d-flex align-items-center">
        <button class="bare d-flex align-items-center gap-2">
          <svg width="9" height="6" viewBox="0 0 9 6" fill="none" stroke="#444" stroke-width="1.700"><path d="M.5 5l4-4 4 4"/></svg>Скрыть папки</button>
        <button class="dlg-btn main ms-auto">Сохранить</button>
        <button class="dlg-btn">Отмена</button>
      </div>
    </div>
  </div>
  <div class="note note-1"><b>1</b>. Выберите каталог (диск, папку)</div>
  <div class="note note-2"><b>2</b>. Измените имя файла (при необходимости)</div>
  <div class="note note-3"><b>3</b>. Выберите расширение файла (при необходимости)</div>
</div>

<script src="https://cdn.jsdelivr.net/npm/bootstrap@5.3.0/dist/js/bootstrap.bundle.min.js"></script>
</body>
</html>
